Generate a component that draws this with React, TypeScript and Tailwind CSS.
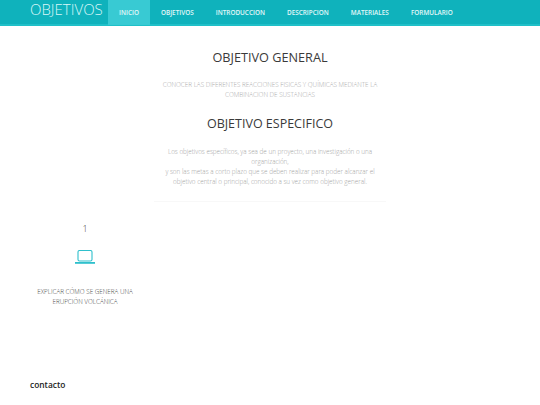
const navItems = ['INICIO', 'OBJETIVOS', 'INTRODUCCION', 'DESCRIPCION', 'MATERIALES', 'FORMULARIO'];

function LaptopIcon() {
  return (
    <svg width="20" height="14" viewBox="0 0 20 14" fill="none" className="block">
      <rect x="3" y="0.5" width="14" height="10.5" rx="1.5" stroke="#2fc0cc" strokeWidth="1.1" />
      <rect x="0" y="12" width="20" height="1.8" fill="#2fc0cc" />
    </svg>
  );
}

export default function App() {
  return (
    <div className="min-h-[405px] bg-white font-['Open_Sans',sans-serif] flex flex-col">
      {/* Header */}
      <header className="h-[26px] bg-[#0fb2bc] border-b-2 border-[#1fc0c8] flex pl-[30px]">
        <div className="w-[78px] text-[15px] leading-[18px] font-light text-[#d8f6f8]">OBJETIVOS</div>
        <nav className="flex h-[24px]">
          {navItems.map((item, i) => (
            <a
              key={item}
              className={`flex items-center justify-center h-[25px] px-[11px] text-[6.4px] font-semibold text-[#e3f8f9] ${i === 0 ? 'bg-[#38cad3]' : ''}`}
            >
              {item}
            </a>
          ))}
        </nav>
      </header>

      {/* Objetivos */}
      <section className="w-[232px] mx-auto mt-[21px] text-center">
        <h2 className="text-[12.7px] leading-[20px] text-[#3a3a3a]">OBJETIVO GENERAL</h2>
        <p className="mt-[13px] text-[6.3px] leading-[10px] font-light text-[#a9a9a9]">
          CONOCER LAS DIFERENTES REACCIONES FISICAS Y QUÍMICAS MEDIANTE LA COMBINACION DE SUSTANCIAS
        </p>
        <h2 className="mt-[14px] text-[12.5px] leading-[20px] text-[#3a3a3a]">OBJETIVO ESPECIFICO</h2>
        <p className="mt-[13px] text-[6.3px] leading-[10px] font-light text-[#a4a4a4]">
          Los objetivos específicos, ya sea de un proyecto, una investigación o una organización,
          <br />
          y son las metas a corto plazo que se deben realizar para poder alcanzar el objetivo central o principal, conocido a su vez como objetivo general.
        </p>
        <div className="mt-[14px] border-b border-[#f8f8f8]" />
      </section>

      {/* Tarjeta */}
      <section className="w-[110px] ml-[30px] mt-[21px] flex flex-col items-center text-center">
        <div className="text-[9px] leading-[12px] font-light text-[#444]">1</div>
        <div className="mt-[15px]">
          <LaptopIcon />
        </div>
        <p className="mt-[23px] w-[110px] text-[6.3px] leading-[10px] font-light text-[#444]">
          EXPLICAR CÓMO SE GENERA UNA ERUPCIÓN VOLCÁNICA
        </p>
      </section>

      <footer className="mt-[72px] pl-[30px] text-[8.4px] leading-[12px] font-semibold text-[#222]">contacto</footer>
    </div>
  );
}
